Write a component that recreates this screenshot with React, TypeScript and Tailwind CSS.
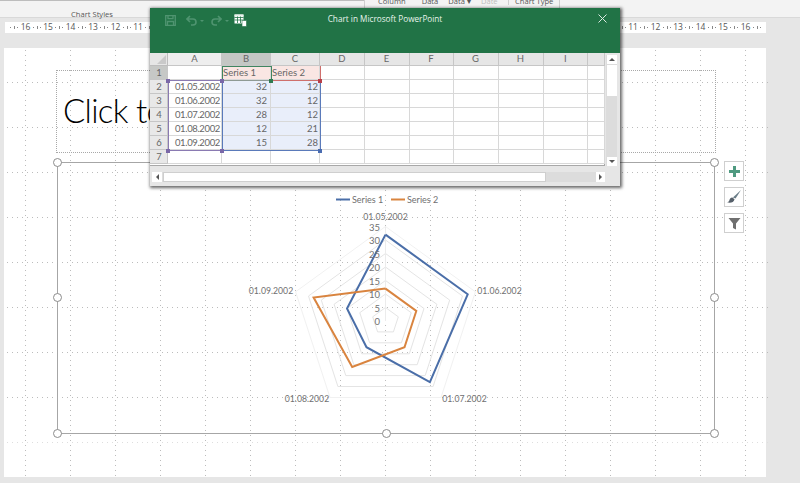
import React from "react";

const CX = 385.5;
const CY = 321;
const U = 2.7;
const pt = (i: number, v: number): [number, number] => {
  const a = (i * 72 * Math.PI) / 180;
  return [CX + v * U * Math.sin(a), CY - v * U * Math.cos(a)];
};
const poly = (vals: number[]) => vals.map((v, i) => pt(i, v).map((n) => n.toFixed(1)).join(",")).join(" ");

const s1 = [32, 32, 28, 12, 15];
const s2 = [12, 12, 12, 21, 28];
const dates = ["01.05.2002", "01.06.2002", "01.07.2002", "01.08.2002", "01.09.2002"];
const cols = ["A", "B", "C", "D", "E", "F", "G", "H", "I", ""];

function Ruler() {
  const cells = Array.from({ length: 35 }, (_, i) => i - 17);
  return (
    <div className="mt-[4px] ml-[5px] flex h-[11px] w-[761px] shrink-0 items-center justify-center overflow-hidden bg-white text-[#555]">
      {cells.map((n) => (
        <div key={n} className="flex h-full w-[22.5px] shrink-0 items-center justify-between">
          <span className="h-[3px] w-px bg-[#888]" />
          <span className="h-px w-px bg-[#888]" />
          <span className="w-[10px] text-center text-[8.5px] leading-none">{Math.abs(n) < 17 && n !== 0 ? Math.abs(n) : ""}</span>
          <span className="h-px w-px bg-[#888]" />
          <span className="w-px" />
        </div>
      ))}
    </div>
  );
}

function Guides() {
  const xs = Array.from({ length: 17 }, (_, i) => 21 + 45 * i);
  const ys = Array.from({ length: 9 }, (_, i) => 34 + 45 * i);
  return (
    <svg className="absolute left-0 top-0 h-[429px] w-[764px]" viewBox="0 0 764 429">
      {xs.map((x) => (
        <line key={x} x1={x + 0.5} x2={x + 0.5} y1={2} y2={429} stroke="#bcbcbc" strokeWidth={1} strokeDasharray="1 4" />
      ))}
      {ys.map((y) => (
        <line key={y} x1={3} x2={764} y1={y + 0.5} y2={y + 0.5} stroke={y === 394 ? "#dedede" : "#bcbcbc"} strokeWidth={1} strokeDasharray="1 4" />
      ))}
    </svg>
  );
}

function Handle({ className }: { className: string }) {
  return <span className={`absolute h-[9px] w-[9px] rounded-full border border-[#8c8c8c] bg-white ${className}`} />;
}

function Chart() {
  const rings = [5, 10, 15, 20, 25, 30, 35];
  const t = { fontFamily: "Lato, sans-serif", fill: "#707070" };
  return (
    <svg className="absolute inset-0 h-full w-full" viewBox="58 163 656 270">
      {rings.map((r) => (
        <polygon key={r} points={poly([r, r, r, r, r])} fill="none" stroke={r === 35 ? "#f1f1f1" : "#e4e4e4"} strokeWidth={1} />
      ))}
      <line x1={CX} x2={CX} y1={CY} y2={CY - 35 * U} stroke="#ececec" />
      <polyline points={poly(s1) + " " + pt(0, s1[0]).join(",")} fill="none" stroke="#4a6ea8" strokeWidth={2} />
      <polyline points={poly(s2) + " " + pt(0, s2[0]).join(",")} fill="none" stroke="#d9843f" strokeWidth={2} />
      <line x1={336} x2={350} y1={199.5} y2={199.5} stroke="#4a6ea8" strokeWidth={2} />
      <text x={352} y={202.5} fontSize={9} {...t}>Series 1</text>
      <line x1={391} x2={405} y1={199.5} y2={199.5} stroke="#d9843f" strokeWidth={2} />
      <text x={407} y={202.5} fontSize={9} {...t}>Series 2</text>
      {[35, 30, 25, 20, 15, 10, 5, 0].map((v) => (
        <text key={v} x={380} y={CY - v * U + 4} textAnchor="end" fontSize={9.5} {...t}>{v}</text>
      ))}
      {([[385.5, 220], [499.5, 294], [464.5, 402], [307, 402], [271, 294]] as const).map(([x, y], i) => (
        <text key={i} x={x} y={y} textAnchor="middle" fontSize={8.7} {...t}>{dates[i]}</text>
      ))}
    </svg>
  );
}

function SideButton({ children }: { children: React.ReactNode }) {
  return <div className="flex h-[20px] w-[20px] items-center justify-center border border-[#cfcfcf] bg-white">{children}</div>;
}

function Cell({ children, className = "" }: { children?: React.ReactNode; className?: string }) {
  return (
    <div className={`flex items-center overflow-hidden whitespace-nowrap border-b border-r border-[#d8d8d8] px-[1px] pt-px text-[9.5px] leading-none text-[#666] ${className}`}>
      {children}
    </div>
  );
}

function Square({ className }: { className: string }) {
  return <span className={`absolute h-[4px] w-[4px] ${className}`} />;
}

function Sheet() {
  return (
    <div className="relative grid w-[455px] grid-cols-[18px_54px_49px_49px_44.5px_45px_44px_45px_45px_44.5px_17px] grid-rows-[13px_repeat(7,14px)] border-b border-r border-[#a8a8a8] bg-white [font-family:Lato,sans-serif]">
      <div className="relative border-b border-r border-[#bdbdbd] bg-[#e6e6e6]">
        <svg className="absolute bottom-[1px] right-[1px] h-[9px] w-[9px]" viewBox="0 0 9 9"><polygon points="9,0 9,9 0,9" fill="#c9c9c9" /></svg>
      </div>
      {cols.map((c, i) => (
        <div key={i} className={`flex items-center justify-center border-b border-r border-[#c6c6c6] text-[9.5px] leading-none text-[#666] ${i === 1 ? "bg-[#c4c7c4]" : i === 0 ? "bg-[#eeeeee]" : "bg-[#e6e6e6]"}`}>{c}</div>
      ))}
      {Array.from({ length: 7 }, (_, r) => (
        <React.Fragment key={r}>
          <div className={`flex items-center justify-center border-b border-r border-[#c6c6c6] pl-px pt-px text-[9.5px] leading-none text-[#666] ${r === 0 ? "bg-[#c6c8c6]" : "bg-[#e8e8e8]"}`}>{r + 1}</div>
          <Cell className="justify-end pr-[1px] tracking-[-0.35px]">{r >= 1 && r <= 5 ? dates[r - 1] : ""}</Cell>
          <Cell className={r === 0 ? "bg-[#fae6e3]" : r <= 5 ? "justify-end bg-[#e9eefa] pr-[3px]" : ""}>{r === 0 ? "Series 1" : r <= 5 ? s1[r - 1] : ""}</Cell>
          <Cell className={r === 0 ? "bg-[#fae6e3]" : r <= 5 ? "justify-end bg-[#e9eefa] pr-[1px]" : ""}>{r === 0 ? "Series 2" : r <= 5 ? s2[r - 1] : ""}</Cell>
          {Array.from({ length: 7 }, (_, i) => <Cell key={i} />)}
        </React.Fragment>
      ))}
      {/* coloured data ranges lying over the cells */}
      <div className="absolute left-[18px] top-[27px] h-[71px] w-[55px] border border-[#8a7ab2]" />
      <div className="absolute left-[72px] top-[27px] h-[71px] w-[99px] border border-[#5a7aba]" />
      <div className="absolute left-[72px] top-[13px] h-[15px] w-[50px] border border-[#3f8560] border-b-[#8f9a94]" />
      <div className="absolute left-[121px] top-[13px] h-[15px] w-[50px] border-r border-b border-[#cf6f6c]" />
      <Square className="left-[16px] top-[26px] bg-[#7a68a8]" />
      <Square className="left-[70px] top-[26px] bg-[#7a68a8]" />
      <Square className="left-[119px] top-[26px] bg-[#2f7a50]" />
      <Square className="left-[168px] top-[26px] bg-[#b8404a]" />
      <Square className="left-[16px] top-[96px] bg-[#7a68a8]" />
      <Square className="left-[70px] top-[96px] bg-[#7a68a8]" />
      <Square className="left-[168px] top-[96px] bg-[#4a6cb0]" />
    </div>
  );
}

function ScrollBtn({ children }: { children: React.ReactNode }) {
  return <div className="flex h-[9px] w-[10px] shrink-0 items-center justify-center bg-white">{children}</div>;
}

function ExcelWindow() {
  return (
    <div className="absolute left-[150px] top-[8px] flex h-[178px] w-[470px] flex-col bg-[#e6e6e6] shadow-[1px_1px_3px_1px_rgba(0,0,0,0.6)]">
      <div className="relative flex h-[45px] shrink-0 items-start bg-[#217346] pl-[15px] pt-[7px]">
        <svg className="h-[11px] w-[11px]" viewBox="0 0 11 11" fill="none" stroke="#4f9470" strokeWidth={1.3}>
          <path d="M.7.7h9.6v9.6H.7zM3 .7v3h5v-3M2.5 10.3V6.5h6v3.8" />
        </svg>
        <svg className="ml-[10px] h-[11px] w-[11px]" viewBox="0 0 11 11" fill="none" stroke="#4f9470" strokeWidth={1.6}>
          <path d="M4 1 1 4l3 3M1 4h6a3 3 0 0 1 0 6H5" />
        </svg>
        <span className="ml-[3px] mt-[5px] h-0 w-0 border-x-[2px] border-t-[2px] border-x-transparent border-t-[#4f9470]" />
        <svg className="ml-[7px] h-[11px] w-[11px]" viewBox="0 0 11 11" fill="none" stroke="#4f9470" strokeWidth={1.6}>
          <path d="m7 1 3 3-3 3M10 4H4a3 3 0 0 0 0 6h2" />
        </svg>
        <span className="ml-[3px] mt-[5px] h-0 w-0 border-x-[2px] border-t-[2px] border-x-transparent border-t-[#4f9470]" />
        <svg className="ml-[5px] -mt-[1px] h-[13px] w-[13px]" viewBox="0 0 13 13">
          <path d="M.5.5h9v9h-9z" fill="#fff" />
          <path d="M.5 3.5h9M.5 6h9M3.5 1v8M6.5 1v8" stroke="#217346" strokeWidth={0.8} />
          <path d="M.5.5h9v2h-9z" fill="#e8f2ec" />
          <path d="M8 6.5h4.5v6H8z" fill="#fff" stroke="#217346" strokeWidth={0.6} />
        </svg>
        <div className="absolute inset-x-0 top-[5px] text-center text-[8.2px] leading-[12px] text-[#e8f3ec] [font-family:'Open_Sans',sans-serif]">Chart in Microsoft PowerPoint</div>
        <svg className="absolute right-[13px] top-[6px] h-[9px] w-[9px]" viewBox="0 0 9 9" stroke="#dcebe2" strokeWidth={1}>
          <path d="M.5.5l8 8M8.5.5l-8 8" />
        </svg>
      </div>
      <div className="flex">
        <Sheet />
        <div className="ml-[1px] mt-[2px] flex h-[111px] w-[11px] flex-col items-center bg-[#dcdcdc]">
          <ScrollBtn><span className="h-0 w-0 border-x-[3px] border-b-[3px] border-x-transparent border-b-[#555]" /></ScrollBtn>
          <div className="mt-[1px] h-[31px] w-[10px] bg-white" />
          <div className="flex-1" />
          <ScrollBtn><span className="h-0 w-0 border-x-[3px] border-t-[3px] border-x-transparent border-t-[#555]" /></ScrollBtn>
        </div>
      </div>
      <div className="ml-[2px] mt-[6px] flex h-[10px] w-[453px] items-stretch bg-[#dcdcdc]">
        <div className="flex w-[10px] items-center justify-center bg-white"><span className="h-0 w-0 border-y-[3px] border-r-[3px] border-y-transparent border-r-[#555]" /></div>
        <div className="ml-[1px] w-[383px] border border-[#cfcfcf] bg-white" />
        <div className="flex-1" />
        <div className="flex w-[9px] items-center justify-center bg-white"><span className="h-0 w-0 border-y-[3px] border-l-[3px] border-y-transparent border-l-[#555]" /></div>
      </div>
    </div>
  );
}

export default function App() {
  return (
    <div className="relative flex h-[483px] w-[800px] flex-col overflow-hidden bg-[#e6e6e6] [font-family:'Open_Sans',sans-serif]">
      <div className="flex h-[18px] shrink-0 border-b border-[#d9d9d9] bg-[#f3f3f3] text-[7.6px] text-[#555]">
        <div className="h-full w-[364px] border-t border-[#bdbdbd]">
          <div className="w-[184px] pt-[7px] text-center leading-[12px]">Chart Styles</div>
        </div>
        <div className="-mt-[5px] flex h-[13px] items-center whitespace-nowrap border-x border-[#cfcfcf] leading-none">
          <span className="flex w-[143px] pl-[13px]">
            <span>Column</span>
            <span className="ml-[16px]">Data</span>
            <span className="ml-[10px]">Data ▾</span>
            <span className="ml-[10px] text-[#bdbdbd]">Date</span>
          </span>
          <span className="border-l border-[#cfcfcf] px-[6px]">Chart Type</span>
        </div>
      </div>
      <Ruler />
      <div className="relative ml-[4px] mt-[15px] h-[429px] w-[762px] shrink-0 bg-white">
        <Guides />
        <div className="relative ml-[52px] mt-[22px] h-[83px] w-[660px] overflow-hidden border border-dotted border-[#a8a8a8] pl-[6px] pt-[19px]">
          <div className="whitespace-nowrap text-[33px] font-light leading-[40px] tracking-[-0.7px] text-black [font-family:Lato,sans-serif]">Click to add title</div>
        </div>
        <div className="relative ml-[53px] mt-[9px] flex h-[272px]">
          <div className="relative h-[272px] w-[658px] border border-[#a6a6a6]">
            <Chart />
            <Handle className="-left-[5px] -top-[5px]" />
            <Handle className="-right-[5px] -top-[5px]" />
            <Handle className="-left-[5px] top-[130px]" />
            <Handle className="-right-[5px] top-[130px]" />
            <Handle className="-left-[5px] -bottom-[5px]" />
            <Handle className="left-[324px] -bottom-[5px]" />
            <Handle className="-right-[5px] -bottom-[5px]" />
          </div>
          <div className="ml-[9px] mt-[-1px] flex flex-col gap-[6px]">
            <SideButton>
              <svg className="h-[11px] w-[11px]" viewBox="0 0 11 11"><path d="M4 0h3v4h4v3H7v4H4V7H0V4h4z" fill="#4f9a80" /></svg>
            </SideButton>
            <SideButton>
              <svg className="h-[16px] w-[16px]" viewBox="0 0 15 15">
                <path d="M6.5 8 14 1 9 9z" fill="#6a7d88" />
                <path d="M6 8c-2 0-2.5 1.5-3 3-.3.8-1 1.2-2 1.5 3 .8 6.5.2 7-3z" fill="#56606a" />
              </svg>
            </SideButton>
            <SideButton>
              <svg className="h-[13px] w-[13px]" viewBox="0 0 13 13"><path d="M.5 1h12L8 6.5V12.5L5 11V6.5z" fill="#6f6f6f" /></svg>
            </SideButton>
          </div>
        </div>
      </div>
      <ExcelWindow />
    </div>
  );
}
